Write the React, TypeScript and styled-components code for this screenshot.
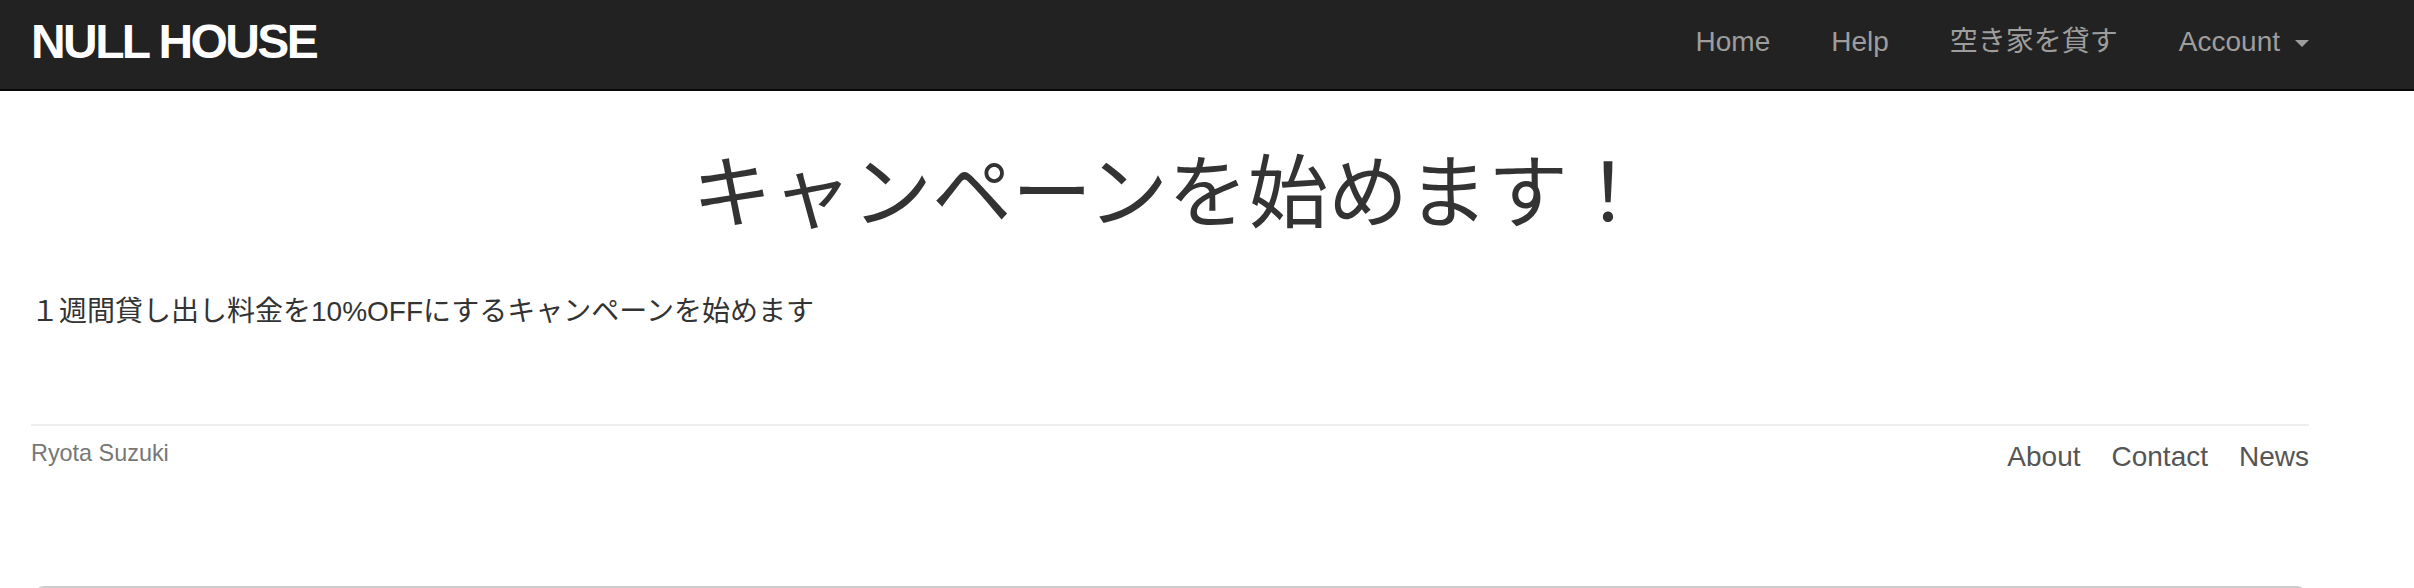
import React from "react";
import styled, { createGlobalStyle } from "styled-components";

const GlobalStyle = createGlobalStyle`
  html, body {
    margin: 0;
    padding: 0;
    background: #fff;
  }
  body {
    font-family: "Liberation Sans", "Noto Sans CJK JP", sans-serif;
    color: #333;
  }
  a {
    text-decoration: none;
  }
`;

const navLinks = ["Home", "Help", "空き家を貸す"];
const footerLinks = ["About", "Contact", "News"];

const App: React.FC = () => {
  return (
    <>
      <GlobalStyle />
      <Navbar>
        <NavInner>
          <Brand href="#">NULL HOUSE</Brand>
          <NavList>
            {navLinks.map((label) => (
              <NavLink key={label} href="#">
                {label}
              </NavLink>
            ))}
            <NavLink href="#">
              Account
              <Caret />
            </NavLink>
          </NavList>
        </NavInner>
      </Navbar>

      <Main>
        <Title>キャンペーンを始めます！</Title>
        <Lead>１週間貸し出し料金を10%OFFにするキャンペーンを始めます</Lead>

        <Footer>
          <Author>Ryota Suzuki</Author>
          <FooterNav>
            {footerLinks.map((label) => (
              <FooterLink key={label} href="#">
                {label}
              </FooterLink>
            ))}
          </FooterNav>
        </Footer>

        <Panel />
      </Main>
    </>
  );
};

export default App;

/* ================= styles ================ */

const Navbar = styled.header`
  height: 89px;
  background: #222;
  border-bottom: 2px solid #080808;
`;

const NavInner = styled.div`
  width: 2278px;
  height: 100%;
  margin-left: 31px;
  display: flex;
  align-items: center;
  justify-content: space-between;
`;

const Brand = styled.a`
  color: #fff;
  font-size: 48px;
  font-weight: 700;
  letter-spacing: -2.6px;
  line-height: 1;
  margin-top: -5px;
`;

const NavList = styled.nav`
  display: flex;
  align-items: center;
  gap: 61px;
`;

const NavLink = styled.a`
  display: flex;
  align-items: center;
  gap: 15px;
  color: #9d9d9d;
  font-size: 28px;
  line-height: 1;
  margin-top: -6px;
`;

const Caret = styled.span`
  width: 0;
  height: 0;
  border-top: 7px solid #9d9d9d;
  border-left: 7px solid transparent;
  border-right: 7px solid transparent;
  margin-top: 4px;
`;

const Main = styled.main`
  width: 2278px;
  margin-left: 31px;
`;

const Title = styled.h1`
  margin: 55px 0 0;
  text-align: center;
  font-family: "Noto Sans CJK JP", sans-serif;
  font-size: 80px;
  font-weight: 400;
  line-height: 80px;
  color: #333;
`;

const Lead = styled.p`
  margin: 66px 0 0;
  font-size: 28px;
  line-height: 1.4;
  color: #333;
`;

const Footer = styled.footer`
  margin-top: 93px;
  padding-top: 11px;
  border-top: 2px solid #eee;
  display: flex;
  justify-content: space-between;
  align-items: flex-start;
`;

const Author = styled.p`
  margin: 0;
  font-size: 23.4px;
  line-height: 1.4;
  color: #777;
`;

const FooterNav = styled.nav`
  display: flex;
  gap: 31px;
`;

const FooterLink = styled.a`
  font-size: 28px;
  line-height: 1.4;
  color: #555;
`;

const Panel = styled.div`
  margin: 110px 2px 0 3px;
  height: 120px;
  border: 2px solid #ccc;
  border-radius: 10px;
`;
